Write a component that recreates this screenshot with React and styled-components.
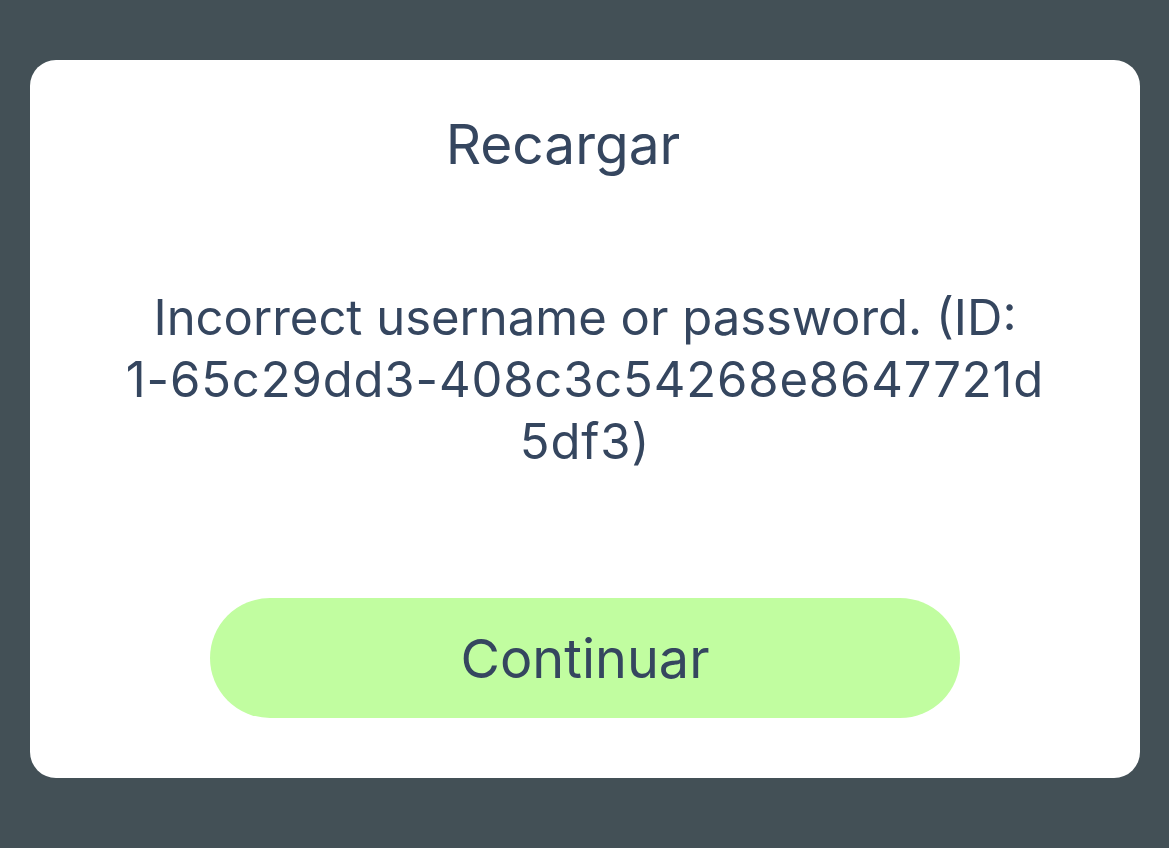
import styled, { createGlobalStyle } from "styled-components";

const GlobalStyle = createGlobalStyle`
  html, body {
    margin: 0;
    padding: 0;
    background: #435056;
    font-family: Inter, "Noto Sans", "Liberation Sans", sans-serif;
  }
`;

const Screen = styled.div`
  width: 100%;
  min-height: 848px;
  box-sizing: border-box;
  padding: 60px 29px 0 30px;
`;

const Dialog = styled.div`
  background: #ffffff;
  border-radius: 26px;
  height: 718px;
  box-sizing: border-box;
  padding: 53px 0 60px;
  display: flex;
  flex-direction: column;
  align-items: center;
  color: #35465f;
`;

const Title = styled.h2`
  margin: 0;
  padding-right: 44px;
  font-size: 55px;
  line-height: 62px;
  font-weight: 400;
`;

const Message = styled.p`
  margin: 112px 0 0;
  width: 930px;
  font-size: 49px;
  line-height: 62px;
  text-align: center;
  overflow-wrap: anywhere;
`;

const ErrorId = styled.span`
  letter-spacing: 0.85px;
`;

const Button = styled.button`
  margin-top: auto;
  width: 750px;
  height: 120px;
  border: none;
  border-radius: 60px;
  background: #c1fda0;
  color: #35465f;
  font-family: inherit;
  font-size: 54px;
  font-weight: 400;
  cursor: pointer;
`;

// keep the ID as one unbreakable word (word joiners around the hyphens)
const errorId = "1-65c29dd3-408c3c54268e8647721d5df3".split("-").join("\u2060-\u2060");

export default function App() {
  return (
    <>
      <GlobalStyle />
      <Screen>
        <Dialog>
          <Title>Recargar</Title>
          <Message>
            Incorrect username or password. (ID: <ErrorId>{errorId})</ErrorId>
          </Message>
          <Button>Continuar</Button>
        </Dialog>
      </Screen>
    </>
  );
}
